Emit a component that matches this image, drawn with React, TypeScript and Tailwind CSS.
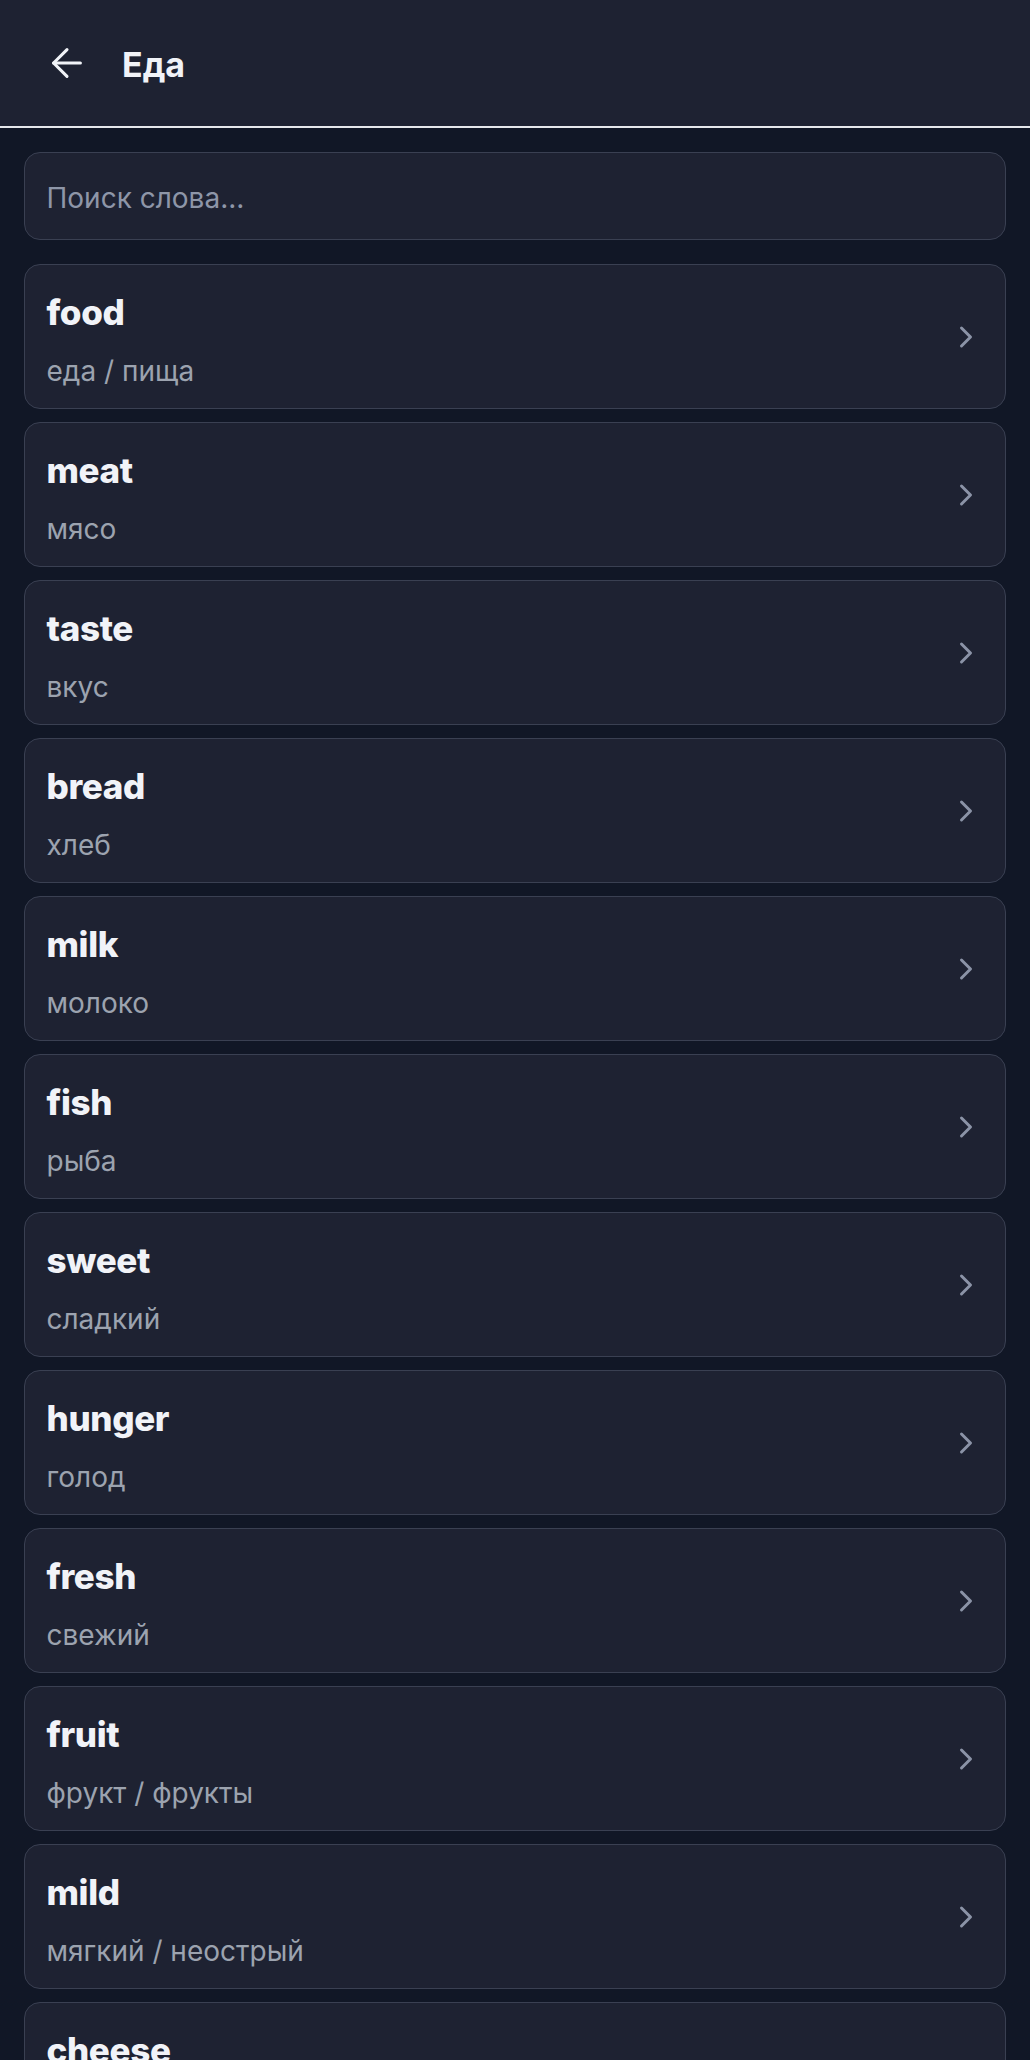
import React from "react";

const words: { en: string; ru: string }[] = [
  { en: "food", ru: "еда / пища" },
  { en: "meat", ru: "мясо" },
  { en: "taste", ru: "вкус" },
  { en: "bread", ru: "хлеб" },
  { en: "milk", ru: "молоко" },
  { en: "fish", ru: "рыба" },
  { en: "sweet", ru: "сладкий" },
  { en: "hunger", ru: "голод" },
  { en: "fresh", ru: "свежий" },
  { en: "fruit", ru: "фрукт / фрукты" },
  { en: "mild", ru: "мягкий / неострый" },
  { en: "cheese", ru: "сыр" },
  { en: "salt", ru: "соль" },
];

function ArrowLeft() {
  return (
    <svg width="46" height="46" viewBox="0 0 24 24" fill="none" stroke="currentColor" strokeWidth="1.6" strokeLinecap="round" strokeLinejoin="round">
      <path d="m12 19-7-7 7-7" />
      <path d="M19 12H5" />
    </svg>
  );
}

function Chevron() {
  return (
    <svg width="36" height="36" viewBox="0 0 24 24" fill="none" stroke="currentColor" strokeWidth="2" strokeLinecap="round" strokeLinejoin="round">
      <path d="m9 18 6-6-6-6" />
    </svg>
  );
}

export default function App() {
  return (
    <div className="min-h-[2060px] bg-[#111726] font-['Inter',sans-serif]">
      <header className="h-[128px] bg-[#1e2232] border-b-2 border-[#e5e7eb] flex items-center pl-[44px]">
        <span className="text-[#f1f3f8]">
          <ArrowLeft />
        </span>
        <h1 className="ml-[32px] mt-[3px] text-[34px] leading-[40px] font-bold text-[#f1f3f8]">Еда</h1>
      </header>
      <main className="px-6 pt-6">
        <div className="h-[88px] rounded-2xl border-[1.5px] border-[#3a4052] bg-[#1e2232] flex items-center pl-[21.5px] pt-[3px]">
          <span className="text-[28px] text-[#8e96a8]">Поиск слова...</span>
        </div>
        <div className="mt-6 flex flex-col gap-[13px]">
          {words.map((w) => (
            <div
              key={w.en}
              className="h-[145px] rounded-2xl border-[1.5px] border-[#3a4052] bg-[#1e2232] flex items-start pl-[21.5px] pr-[21.5px] pt-[27px]"
            >
              <div className="flex-1 flex flex-col">
                <div className="text-[35px] leading-[40px] font-extrabold tracking-[-0.01em] text-[#f1f3f8]">{w.en}</div>
                <div className="mt-[21px] text-[28px] leading-[36px] text-[#9ca3af]">{w.ru}</div>
              </div>
              <span className="self-center -mt-[27px] text-[#8b93a7]">
                <Chevron />
              </span>
            </div>
          ))}
        </div>
      </main>
    </div>
  );
}
